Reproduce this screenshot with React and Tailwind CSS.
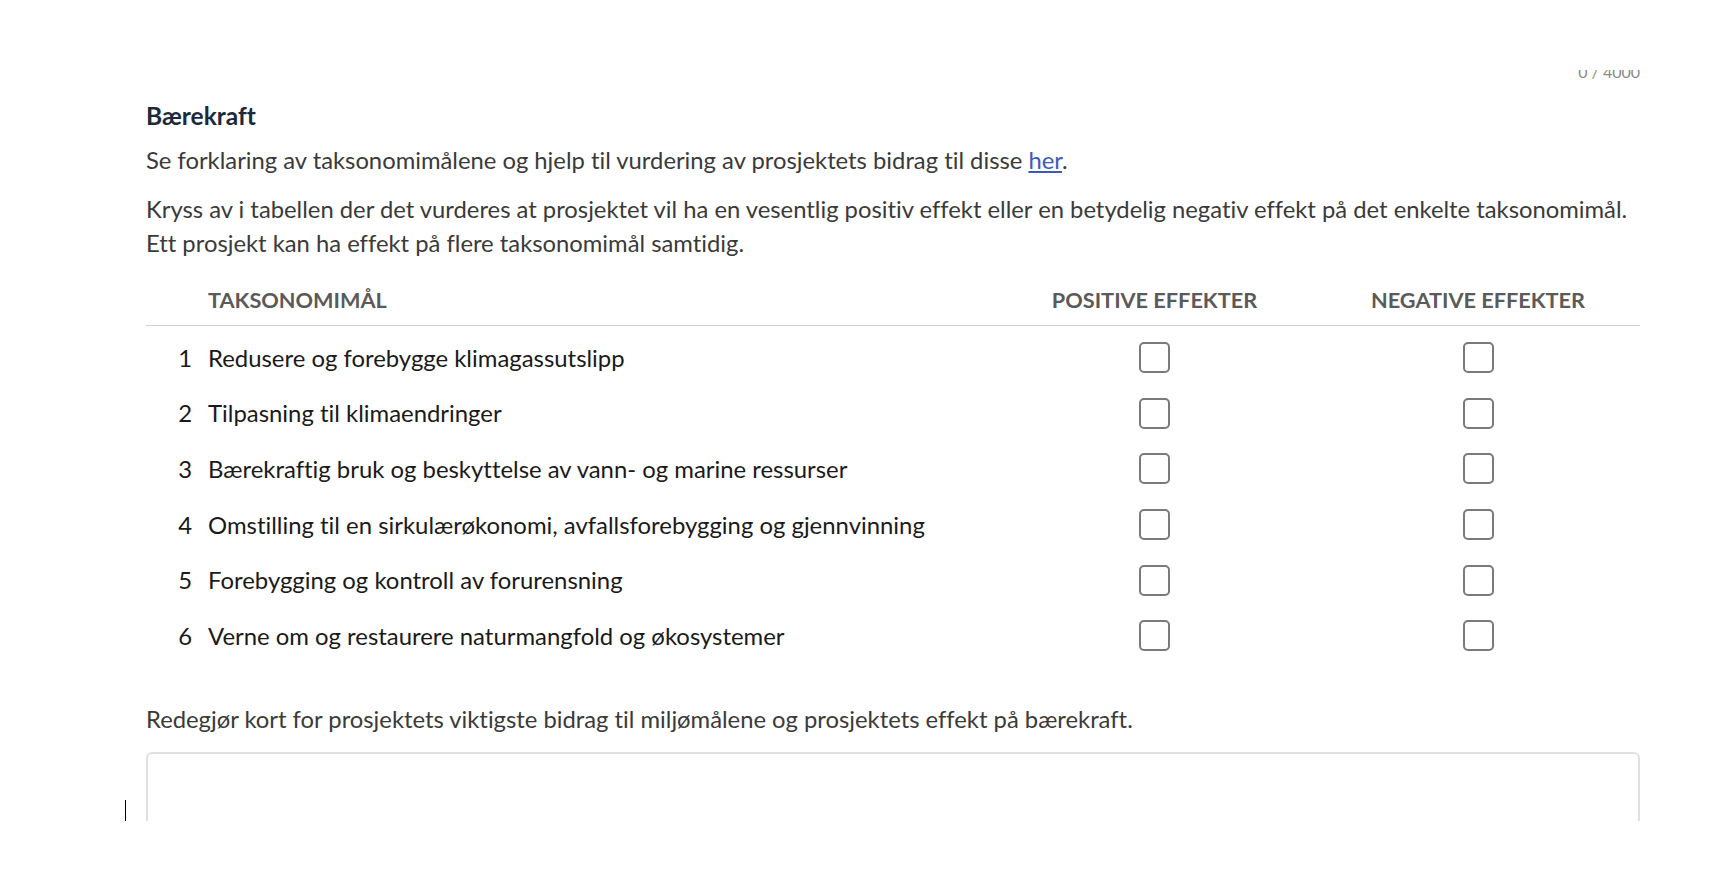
import React, { useState } from "react";

const goals = [
  "Redusere og forebygge klimagassutslipp",
  "Tilpasning til klimaendringer",
  "Bærekraftig bruk og beskyttelse av vann- og marine ressurser",
  "Omstilling til en sirkulærøkonomi, avfallsforebygging og gjennvinning",
  "Forebygging og kontroll av forurensning",
  "Verne om og restaurere naturmangfold og økosystemer",
];

function Box({ checked, onClick }) {
  return (
    <button
      onClick={onClick}
      className="w-[31px] h-[31px] rounded-[5px] border-2 border-[#7a7a7a] bg-white flex items-center justify-center text-[#333]"
    >
      {checked ? "✓" : null}
    </button>
  );
}

export default function App() {
  const [checks, setChecks] = useState({});
  const toggle = (key) => setChecks((prev) => ({ ...prev, [key]: !prev[key] }));

  return (
    <div className="relative h-[884px] bg-white font-['Lato','Noto_Sans',sans-serif] text-[#3a3a3a] [font-variant-ligatures:none]">
      <div className="pt-[70px]">
        <div className="h-[751px] overflow-hidden">
          <div className="pl-[146px] pr-[77px]">
            {/* Counter (scrolled partly out of view) */}
            <div className="mt-[-8px] h-[20px] leading-[20px] text-right text-[16px] text-[#8a8a8a]">
              0 / 4000
            </div>

            {/* Title */}
            <h2 className="mt-[20px] text-[24.5px] leading-[28px] font-bold text-[#1c2b39]">Bærekraft</h2>

            <p className="mt-[13px] text-[23.8px] leading-[34px]">
              Se forklaring av taksonomimålene og hjelp til vurdering av prosjektets bidrag til disse{" "}
              <a href="#" className="text-[#3b5bb5] underline">
                her
              </a>
              .
            </p>

            <p className="mt-[15px] text-[23.8px] leading-[34px]">
              Kryss av i tabellen der det vurderes at prosjektet vil ha en vesentlig positiv effekt eller en betydelig negativ effekt på det enkelte taksonomimål.
              <br />
              Ett prosjekt kan ha effekt på flere taksonomimål samtidig.
            </p>

            {/* Table */}
            <div className="mt-[28px]">
              <div className="grid grid-cols-[62px_1fr_323px_324px] pb-[13px] border-b border-[#cfcfcf] text-[21.7px] leading-[24px] font-bold uppercase text-[#5a5a5a]">
                <div />
                <div>Taksonomimål</div>
                <div className="text-center">Positive effekter</div>
                <div className="text-center">Negative effekter</div>
              </div>
              <div className="pt-[4px]">
                {goals.map((g, i) => (
                  <div
                    key={g}
                    className="grid grid-cols-[62px_1fr_323px_324px] h-[55.6px] items-center text-[23.9px] text-[#1a1a1a]"
                  >
                    <div className="text-right pr-[16px]">{i + 1}</div>
                    <div>{g}</div>
                    <div className="flex justify-center">
                      <Box checked={checks[`p${i}`]} onClick={() => toggle(`p${i}`)} />
                    </div>
                    <div className="flex justify-center">
                      <Box checked={checks[`n${i}`]} onClick={() => toggle(`n${i}`)} />
                    </div>
                  </div>
                ))}
              </div>
            </div>

            <p className="mt-[38px] text-[23.8px] leading-[34px]">
              Redegjør kort for prosjektets viktigste bidrag til miljømålene og prosjektets effekt på bærekraft.
            </p>

            <textarea className="mt-[16px] block w-full h-[160px] rounded-md border-2 border-[#e0e0e0] resize-none outline-none p-3" />
          </div>
        </div>
      </div>

      {/* Mouse text cursor */}
      <div className="absolute left-[125px] top-[800px] w-px h-[21px] bg-black" />
    </div>
  );
}
